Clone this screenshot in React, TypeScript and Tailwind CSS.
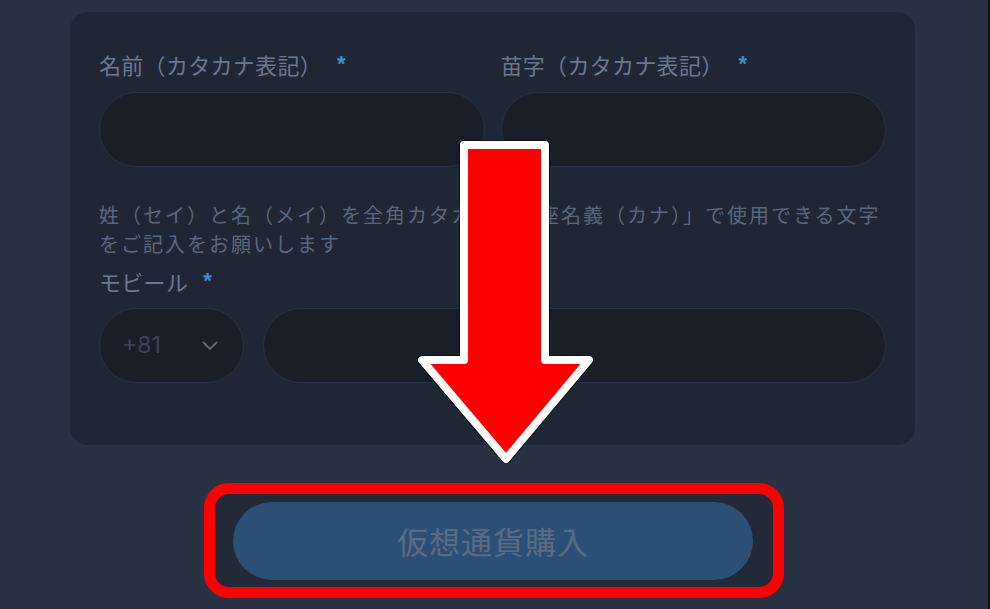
import React from "react";

function Label({ text }: { text: string }) {
  return (
    <div className="flex items-center h-[32px] text-[22px] leading-[32px] tracking-[0.3px] text-[#6a7990]">
      <span>{text}</span>
      <span className="ml-[15px] text-[22px] font-bold text-[#3a8fd9] [font-family:'Liberation_Sans',sans-serif]">*</span>
    </div>
  );
}

function Field() {
  return <div className="h-[75px] rounded-full bg-[#191e29] border border-[#283144]" />;
}

export default function App() {
  return (
    <div className="relative w-[990px] h-[609px] overflow-hidden bg-[#283243] flex [font-family:'Noto_Sans_CJK_JP','Noto_Sans',sans-serif]">
      <div className="flex-1 flex flex-col">
        <div className="ml-[70px] mt-[12px] w-[845px] h-[433px] rounded-[18px] bg-[#1f2636] pt-[36px] px-[29px]">
          <div className="grid grid-cols-2 gap-x-[16px]">
            <div className="flex flex-col gap-[12px]">
              <Label text="名前（カタカナ表記）" />
              <Field />
            </div>
            <div className="flex flex-col gap-[12px]">
              <Label text="苗字（カタカナ表記）" />
              <Field />
            </div>
          </div>
          <p className="mt-[33px] text-[20px] leading-[29px] tracking-[2px] text-[#59677e] whitespace-nowrap">
            姓（セイ）と名（メイ）を全角カタカナ「口座名義（カナ）」で使用できる文字
            <br />
            をご記入をお願いします
          </p>
          <div className="mt-[7px]">
            <Label text="モビール" />
          </div>
          <div className="mt-[11px] flex gap-[19px]">
            <div className="w-[145px] h-[75px] rounded-full bg-[#191e29] border border-[#283144] flex items-center justify-between pl-[22px] pr-[25px]">
              <span className="text-[23px] text-[#3a4457] [font-family:Inter,'Noto_Sans',sans-serif]">+81</span>
              <svg width="16" height="10" viewBox="0 0 16 10" fill="none">
                <path d="M1.5 1.5 L8 8 L14.5 1.5" stroke="#5d6879" strokeWidth="2" strokeLinecap="round" strokeLinejoin="round" />
              </svg>
            </div>
            <div className="flex-1 h-[75px] rounded-full bg-[#191e29] border border-[#283144]" />
          </div>
        </div>

        <div className="ml-[204px] mt-[38px] w-[580px] border-[11px] border-[#ff0000] rounded-[25px] bg-[#222a39] pt-[8px] pb-[7px] pl-[18px] pr-[20px]">
          <button className="w-[520px] h-[78px] rounded-full bg-[#2c5074] flex items-center justify-center text-[31px] tracking-[1px] text-[#586c83]">
            仮想通貨購入
          </button>
        </div>
      </div>
      <div className="w-[2px] bg-[#111318]" />

      <svg className="absolute left-0 top-0 pointer-events-none" width="990" height="609" viewBox="0 0 990 609">
        <polygon
          points="464,145 545,145 545,360 589,360 506,459 422,360 464,360"
          fill="none"
          stroke="rgba(0,0,0,0.55)"
          strokeWidth="10"
          strokeLinejoin="round"
        />
        <polygon
          points="464,145 545,145 545,360 589,360 506,459 422,360 464,360"
          fill="#ff0000"
          stroke="#ffffff"
          strokeWidth="8"
          strokeLinejoin="round"
        />
      </svg>
    </div>
  );
}
